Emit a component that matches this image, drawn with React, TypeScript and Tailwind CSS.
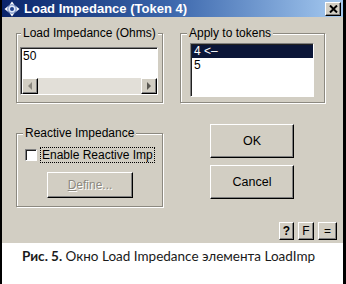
// App.tsx
// Win2000-style "Load Impedance" dialog with a figure caption underneath

const raised =
  "border border-t-white border-l-white border-r-black border-b-black shadow-[inset_-1px_-1px_0_#808080]";
const sunken =
  "border border-t-[#808080] border-l-[#808080] border-r-white border-b-white shadow-[inset_1px_1px_0_#202020]";
const etched = "border border-[#8c8980] shadow-[1px_1px_0_#fff,inset_1px_1px_0_#fff]";

function TitleIcon() {
  return (
    <svg width="16" height="16" viewBox="0 0 16 16">
      <path d="M8 0.5 L10.5 4 L15.5 8 L10.5 12 L8 15.5 L5.5 12 L0.5 8 L5.5 4 Z" fill="#ffffff" />
      <circle cx="8" cy="8" r="4.2" fill="#dfe8f8" stroke="#5a78b8" strokeWidth="1" />
      <circle cx="8" cy="8" r="2" fill="#1d3f8f" />
    </svg>
  );
}

function GroupLabel({ children, ml }: { children: React.ReactNode; ml: string }) {
  return (
    <span className={`-mt-[8px] ${ml} self-start px-[2px] bg-[#d2cec3] leading-[14px]`}>
      {children}
    </span>
  );
}

function ArrowButton({ dir }: { dir: "left" | "right" }) {
  return (
    <div className={`w-[16px] h-[16px] bg-[#d2cec3] ${raised} flex items-center justify-center`}>
      <svg width="6" height="8" viewBox="0 0 6 8">
        {dir === "left" ? (
          <path d="M5 0 L1 4 L5 8 Z" fill="#8a877f" />
        ) : (
          <path d="M1 0 L5 4 L1 8 Z" fill="#5a5852" />
        )}
      </svg>
    </div>
  );
}

export default function App() {
  return (
    <div
      className="w-[346px] h-[284px] bg-white overflow-hidden flex flex-col border-l-2 border-r-[3px] border-black text-[12px] text-black"
      style={{ fontFamily: '"Liberation Sans", Arial, sans-serif' }}
    >
      {/* Dialog */}
      <div className="h-[243px] bg-[#d2cec3] flex flex-col">
        {/* Title bar */}
        <div className="h-[17px] flex items-center bg-gradient-to-r from-[#0a246a] via-[#3d68ad] to-[#a6caf0] pl-[2px] pr-[2px]">
          <TitleIcon />
          <span className="ml-[4px] text-white font-bold text-[13px] leading-none">
            Load Impedance (Token 4)
          </span>
          <div className={`ml-auto w-[16px] h-[14px] bg-[#d2cec3] ${raised} flex items-center justify-center`}>
            <svg width="9" height="8" viewBox="0 0 9 8">
              <path d="M1 0.5 L8 7.5 M8 0.5 L1 7.5" stroke="#000" strokeWidth="2" />
            </svg>
          </div>
        </div>

        {/* Body */}
        <div className="flex-1 flex flex-col pl-[14px] pt-[16px]">
          {/* Row 1 */}
          <div className="flex items-start">
            <div className={`w-[147px] h-[70px] ${etched} flex flex-col`}>
              <GroupLabel ml="ml-[4px]">Load Impedance (Ohms)</GroupLabel>
              <div className={`mt-[7px] ml-[3px] w-[138px] h-[48px] bg-white ${sunken} flex flex-col`}>
                <div className="flex-1 pl-[2px] pt-[1px] leading-[14px]">50</div>
                <div className="h-[16px] ml-[1px] flex bg-[#e2dfd8]">
                  <ArrowButton dir="left" />
                  <div className="flex-1" />
                  <ArrowButton dir="right" />
                </div>
              </div>
            </div>

            <div className={`ml-[17px] w-[145px] h-[70px] ${etched} flex flex-col`}>
              <GroupLabel ml="ml-[6px]">Apply to tokens</GroupLabel>
              <div className={`mt-[3px] ml-[9px] w-[124px] h-[54px] bg-white ${sunken} pt-[1px] pl-[1px]`}>
                <div className="h-[13px] bg-[#0b1638] text-white pl-[2px] leading-[13px]">4 &lt;–</div>
                <div className="h-[13px] pl-[2px] leading-[13px] mt-[1px]">5</div>
              </div>
            </div>
          </div>

          {/* Row 2 */}
          <div className="flex items-start mt-[21px]">
            <div className={`mt-[9px] w-[147px] h-[74px] ${etched} flex flex-col`}>
              <GroupLabel ml="ml-[6px]">Reactive Impedance</GroupLabel>
              <div className="mt-[7px] ml-[8px] flex items-center">
                <div className={`w-[12px] h-[12px] bg-white ${sunken}`} />
                <span className="ml-[3px] px-[1px] leading-[14px] border border-dotted border-black">
                  Enable Reactive Imp
                </span>
              </div>
              <button
                className={`mt-[9px] ml-[30px] w-[86px] h-[26px] bg-[#d2cec3] ${raised} text-[#8c8980] [text-shadow:1px_1px_0_#fff]`}
              >
                <span className="underline">D</span>efine...
              </button>
            </div>

            <div className="ml-[47px] flex flex-col gap-[7px]">
              <button className={`w-[84px] h-[34px] bg-[#d2cec3] ${raised} text-[12.5px]`}>OK</button>
              <button className={`w-[84px] h-[34px] bg-[#d2cec3] ${raised} text-[12.5px]`}>Cancel</button>
            </div>
          </div>

          {/* Row 3 */}
          <div className="flex justify-end gap-[4px] mt-[15px] pr-[6px]">
            <button className={`w-[15px] h-[18px] bg-[#d2cec3] ${raised} font-bold leading-none`}>?</button>
            <button className={`w-[16px] h-[18px] bg-[#d2cec3] ${raised} leading-none`}>F</button>
            <button className={`w-[19px] h-[18px] bg-[#d2cec3] ${raised} leading-none`}>=</button>
          </div>
        </div>
      </div>

      {/* Caption */}
      <div
        className="flex-1 pl-[20px] pt-[4px] text-[13.5px] leading-[18px] text-[#1a1a1a]"
        style={{ fontFamily: 'Lato, "Open Sans", sans-serif' }}
      >
        <span className="font-bold">Рис. 5.</span> Окно Load Impedance элемента LoadImp
      </div>
    </div>
  );
}
